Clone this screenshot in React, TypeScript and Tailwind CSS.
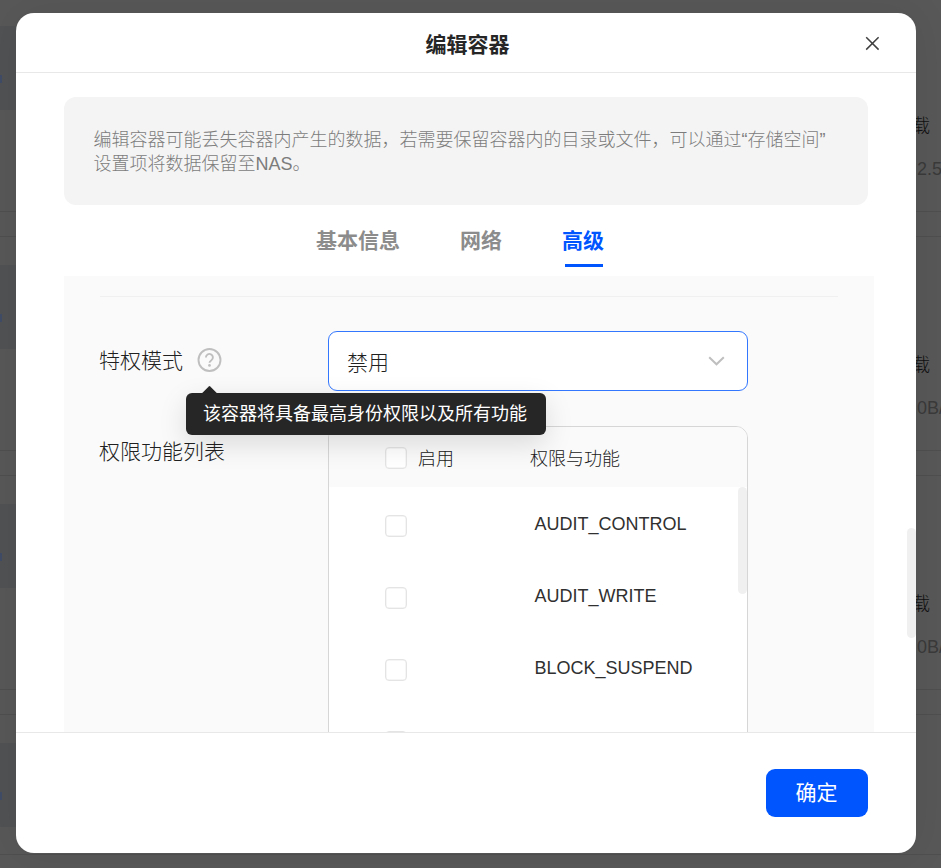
import React from "react";

const FONT = "font-['Liberation_Sans','Noto_Sans_CJK_SC',sans-serif]";

const capabilities = ["AUDIT_CONTROL", "AUDIT_WRITE", "BLOCK_SUSPEND", ""];
const speeds = ["2.5", "0B/", "0B/"];

function Checkbox() {
  return <span className="block size-[22px] shrink-0 rounded-[4px] border-[1.5px] border-[#e4e4e4] bg-white shadow-[inset_0_0_0_0.5px_#ececec]" />;
}

function Thumbnail() {
  return (
    <div className="flex h-[84px] w-24 items-center bg-[#505254]">
      <span className="mt-[22px] ml-[3px] h-2 w-0.5 bg-[#414c66]" />
    </div>
  );
}

function ContainerCard({ speed }: { speed: string }) {
  return (
    <div className="-mx-1 flex h-[215px] shrink-0 justify-between border border-[#4f4f4f] pt-7">
      <Thumbnail />
      <div className="w-[28px] pt-[86px] text-[#101010]">
        <div className="-ml-[22px] text-[18px] leading-[28px] font-light whitespace-nowrap">下载</div>
        <div className="mt-[17px] ml-px text-[18px] leading-6 whitespace-nowrap text-[#3a3a3a]">{speed}</div>
      </div>
    </div>
  );
}

function Tooltip({ children }: { children: React.ReactNode }) {
  return (
    <div className="absolute top-[36px] left-[-12px] z-20">
      <span className="absolute -top-[5px] left-[18px] size-[11px] rotate-45 rounded-tl-[1px] bg-[#262626]" />
      <div className="relative flex h-[42px] w-[360px] items-center rounded-[6px] bg-[#262626] pl-[17px] text-[18px] whitespace-nowrap text-white shadow-[0_9px_28px_rgba(0,0,0,0.13)]">
        {children}
      </div>
    </div>
  );
}

function Header() {
  return (
    <header className="relative flex h-[60px] shrink-0 items-center justify-center border-b border-[#e8e8e8] pt-1 pr-0 pl-[3px]">
      <h1 className="text-[21px] font-bold text-[#262626]">编辑容器</h1>
      <svg className="absolute top-[23px] left-[849px]" width="15" height="15" viewBox="0 0 15 15">
        <path d="M1.2 1.2 13.6 13.6M13.6 1.2 1.2 13.6" stroke="#404040" strokeWidth="1.5" />
      </svg>
    </header>
  );
}

function Tabs() {
  return (
    <nav className="flex h-[71px] gap-[60px] pt-[21px] pl-[252px] text-[21px] leading-[30px] font-bold text-[#8c8c8c]">
      <span>基本信息</span>
      <span>网络</span>
      <span className="flex flex-col text-[#0055ff]">
        高级
        <i className="mt-2 ml-[3px] h-[3px] w-[38px] bg-[#0055ff]" />
      </span>
    </nav>
  );
}

function CapabilityTable() {
  return (
    <div className="h-[400px] w-[420px] overflow-hidden rounded-t-xl border border-[#d6d6d6] bg-white">
      <div className="flex h-[60px] items-center bg-[#fafafa] pt-[2px] pl-14 text-[18px] font-light">
        <Checkbox />
        <span className="mt-0.5 ml-[11px] w-[112px]">启用</span>
        <span className="mt-0.5">权限与功能</span>
      </div>
      <div className="flex">
        <div className="grow">
          {capabilities.map((name, i) => (
            <div key={i} className="flex h-[72px] items-start pt-7 pl-14">
              <Checkbox />
              <span className="-mt-[3px] ml-[127.5px] text-[18px] leading-6 text-[#303030]">{name}</span>
            </div>
          ))}
        </div>
        <div className="h-[107px] w-[9px] rounded-full bg-[#f0f0f0]" />
      </div>
    </div>
  );
}

function AdvancedPanel() {
  return (
    <section className="h-[456px] w-[810px] overflow-hidden bg-[#fafafa] pt-5 pl-9 text-[21px] font-light text-[#202020]">
      <div className="w-[738px] border-t border-[#f0f0f0]" />
      <div className="mt-[34px] flex h-[60px]">
        <div className="flex w-[228px] items-center">
          <span className="-ml-px">特权模式</span>
          <span className="relative ml-[14px]">
            <svg width="25" height="24" viewBox="0 0 25 24" className="-mt-0.5 block" fill="none">
              <circle cx="12.5" cy="12" r="11" stroke="#bfbfbf" strokeWidth="1.9" />
              <path d="M8.9 9.5a3.5 3.5 0 1 1 5.5 2.8c-1.2.8-1.9 1.2-1.9 2.4" stroke="#bfbfbf" strokeWidth="1.9" />
              <circle cx="12.5" cy="17.4" r="1.35" fill="#bfbfbf" />
            </svg>
            <span className="absolute top-[7px] left-px block">
              <Tooltip>
                <span className="font-normal">该容器将具备最高身份权限以及所有功能</span>
              </Tooltip>
            </span>
          </span>
        </div>
        <div className="flex w-[420px] items-center justify-between rounded-[9px] border border-[#3377ff] bg-white pr-[22px] pl-[18px]">
          <span className="pt-[3px]">禁用</span>
          <svg width="17" height="10" viewBox="0 0 17 10" className="mb-px" fill="none">
            <path d="m1.2 1.2 7.3 7.1 7.3-7.1" stroke="#bfbfbf" strokeWidth="2" />
          </svg>
        </div>
      </div>
      <div className="mt-[35px] flex">
        <div className="-ml-px w-[229px] pt-[11px] leading-[30px]">权限功能列表</div>
        <CapabilityTable />
      </div>
    </section>
  );
}

export default function App() {
  return (
    <div className={`relative h-[868px] w-[941px] overflow-hidden bg-[#585858] ${FONT}`}>
      <div className="-mt-[3px] flex flex-col gap-6">
        {speeds.map((speed, i) => (
          <ContainerCard key={i} speed={speed} />
        ))}
        <div className="-mx-1 h-[141px] border border-[#4f4f4f] pt-7">
          <Thumbnail />
        </div>
      </div>
      <main className="absolute top-[13px] left-4 flex h-[840px] w-[900px] flex-col overflow-hidden rounded-[18px] bg-white text-[#262626] shadow-[0_0_40px_rgba(0,0,0,0.08)]">
        <Header />
        <div className="flex h-[659px] shrink-0 justify-between pt-6 pl-12">
          <div>
            <p className="h-[108px] w-[804px] rounded-xl bg-[#f4f4f4] pt-[31px] pl-[29.5px] text-[18px] leading-6 font-light whitespace-nowrap text-[#7c7c7c]">
              编辑容器可能丢失容器内产生的数据，若需要保留容器内的目录或文件，可以通过“存储空间”
              <br />
              设置项将数据保留至NAS。
            </p>
            <Tabs />
            <AdvancedPanel />
          </div>
          <div className="mt-[431px] h-[110px] w-[9px] rounded-full bg-[#f0f0f0]" />
        </div>
        <footer className="flex grow items-start justify-end border-t border-[#e8e8e8] pt-9 pr-12">
          <button className="h-12 w-[102px] rounded-[9px] bg-[#0055ff] pr-px text-[21px] text-white">确定</button>
        </footer>
      </main>
    </div>
  );
}
